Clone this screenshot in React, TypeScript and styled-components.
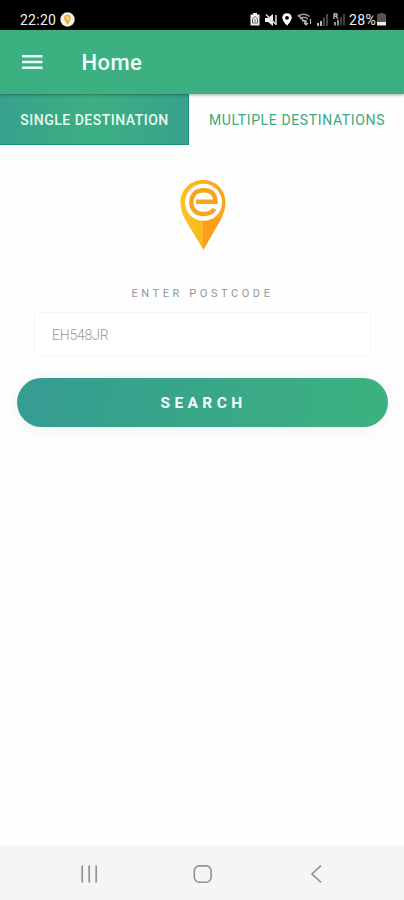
import React from "react";
import styled, { createGlobalStyle } from "styled-components";

const GlobalStyle = createGlobalStyle`
  * { box-sizing: border-box; }
  body { margin: 0; background: #fefefe; font-family: Roboto, sans-serif; }
  button, input { font-family: inherit; }
`;

const Screen = styled.div`
  display: flex;
  flex-direction: column;
  height: 900px;
  width: 100%;
  overflow: hidden;
  background: #fefefe;
`;

const StatusBar = styled.div`
  display: flex;
  align-items: center;
  height: 30px;
  flex: none;
  padding: 9px 18px 0 20px;
  background: #000;
  color: #eee;
`;

const StatusText = styled.span<{ $tracking: number }>`
  font-size: 14px;
  line-height: 20px;
  letter-spacing: ${(p) => p.$tracking}px;
`;

const AppBadge = styled.svg`
  margin-left: 4px;
  flex: none;
`;

const StatusIcons = styled.div`
  display: flex;
  align-items: center;
  gap: 5px;
  margin-left: auto;
  svg { flex: none; display: block; }
`;

const BatteryReading = styled.div`
  display: flex;
  align-items: center;
  margin-left: -1px;
  gap: 1px;
`;

const Header = styled.header`
  display: flex;
  align-items: center;
  flex: none;
  height: 64px;
  padding-left: 22px;
  background: #3cb081;
  box-shadow: 0 1px 3px rgba(0, 0, 0, 0.35);
  z-index: 1;
`;

const MenuButton = styled.button`
  display: flex;
  padding: 0;
  border: 0;
  background: none;
`;

const Title = styled.h1`
  margin: 1px 0 0 38.5px;
  color: #f0fff8;
  font-size: 22px;
  font-weight: 500;
  line-height: 28px;
  letter-spacing: 0.4px;
`;

const Tabs = styled.div`
  display: flex;
  flex: none;
  height: 51px;
`;

const Tab = styled.button<{ $active?: boolean }>`
  flex: ${(p) => (p.$active ? "0 0 189px" : "1")};
  padding: ${(p) => (p.$active ? "2px 0 0 1px" : "1px 0 0 1px")};
  border: 0 solid #159078;
  border-width: ${(p) => (p.$active ? "0 1px 1px 0" : "0")};
  background: ${(p) =>
    p.$active ? "linear-gradient(90deg, #38a18e 0%, #3cb081 50%, #38a18e 100%)" : "transparent"};
  color: ${(p) => (p.$active ? "#e8fbf4" : "#3aa980")};
  font-size: 14px;
  font-weight: ${(p) => (p.$active ? 500 : 400)};
  letter-spacing: ${(p) => (p.$active ? 0.5 : 0.63)}px;
  white-space: nowrap;
`;

const Form = styled.form`
  display: flex;
  flex-direction: column;
  align-items: center;
  flex: 1;
  padding: 35px 16px 0 17px;
`;

const Label = styled.label`
  margin-top: 36px;
  height: 16px;
  font-size: 11px;
  line-height: 16px;
  letter-spacing: 3.58px;
  color: #969696;
`;

const PostcodeInput = styled.input`
  width: 337px;
  height: 45px;
  margin-top: 10px;
  padding: 0 17px 0;
  border: 1px solid #f7f7f7;
  background: #fff;
  font-size: 14px;
  letter-spacing: -0.2px;
  font-weight: 300;
  &::placeholder { color: #989898; opacity: 1; }
`;

const SearchButton = styled.button`
  width: 100%;
  height: 49px;
  margin-top: 21px;
  padding: 0 0 0 2px;
  border: 0;
  border-radius: 25px;
  background: linear-gradient(105deg, #359d91 8%, #3cb080 92%);
  box-shadow: 0 2px 18px rgba(0, 0, 0, 0.06);
  color: #f4fffc;
  font-size: 15.5px;
  font-weight: 700;
  letter-spacing: 4.4px;
`;

const NavBar = styled.nav`
  display: grid;
  grid-template-columns: repeat(3, 20px);
  gap: 94px;
  align-items: center;
  flex: none;
  height: 54px;
  padding: 1px 0 0 79px;
  background: #f5f5f5;
  svg { display: block; }
`;

function PinLogo() {
  return (
    <svg width="46" height="70" viewBox="0 0 46 70">
      <defs>
        <linearGradient id="pinShade" x1="0" x2="1" y1="0.3" y2="0">
          <stop offset="0" stopColor="#fac321" />
          <stop offset="1" stopColor="#f8a01f" />
        </linearGradient>
      </defs>
      <path d="M23 0C10 0 .5 10 .5 22.500C.5 32 5 39 9 46L23.500 70L37 46C41 39 45.500 32 45.500 22.500C45.500 10 36 0 23 0Z" fill="url(#pinShade)" />
      <path d="M23 40V69.500L37 46L42 37Z" fill="#fa9e1b" />
      <circle cx="23.500" cy="22.300" r="18.500" fill="#fff" />
      <path d="M16 21.700H35.500C35 13.500 31 10.300 23.500 10.300C15.300 10.300 11.300 15.500 11.300 22.300C11.300 29.500 16 34 23.500 34C28.500 34 32.500 32 34.500 29" fill="none" stroke="#f8a51e" strokeWidth="4.400" />
    </svg>
  );
}

export default function App() {
  return (
    <>
      <GlobalStyle />
      <Screen>
        <StatusBar>
          <StatusText $tracking={0.25}>22:20</StatusText>
          <AppBadge width="15" height="15" viewBox="0 0 15 15">
            <circle cx="7.500" cy="7.500" r="7.200" fill="#f5f2e8" />
            <path d="M7.500 2.500C5 2.500 4 4.300 4 6C4 8.500 7.500 12.800 7.500 12.800S11 8.500 11 6C11 4.300 10 2.500 7.500 2.500Z" fill="#e9b43d" />
            <circle cx="7.500" cy="6" r="1.800" fill="#eed393" />
          </AppBadge>
          <StatusIcons>
            <svg width="10" height="13" viewBox="0 0 10 13">
              <path d="M3 0H7V1.500H9.500V12.500H.5V1.500H3Z" fill="#eee" />
              <path d="M5 3.500L2.500 6V10H7.500V6ZM5 6V9" fill="none" stroke="#666" />
            </svg>
            <svg width="12" height="12" viewBox="0 0 12 12">
              <path d="M0 4H3L8 0V12L3 8H0Z" fill="#eee" />
              <path d="M1 .5L11 10.500M11 1V11" stroke="#ddd" strokeWidth="1.500" />
            </svg>
            <svg width="10" height="13" viewBox="0 0 10 13">
              <path d="M5 .3C2 .3.3 2.300.3 4.800C.3 8 5 12.700 5 12.700S9.700 8 9.700 4.800C9.700 2.300 8 .3 5 .3Z" fill="#fff" />
              <circle cx="5" cy="4.800" r="1.900" fill="#000" />
            </svg>
            <svg width="15" height="13" viewBox="0 0 15 13">
              <path d="M1 3.500Q6.500-1 12.500 3.500M3 6Q7 2.500 11 6M5 8.500Q7 6.500 9 8.500" fill="none" stroke="#999" strokeWidth="1.500" />
              <path d="M1 2L10 11M9 7V12M7 10L9 12L11 10M13.500 11V6" fill="none" stroke="#bbb" strokeWidth="1.100" />
            </svg>
            <svg width="11" height="12" viewBox="0 0 11 12">
              <path d="M1 9V12M4 7V12" stroke="#bbb" strokeWidth="2" />
              <path d="M7 3.500V12M10 0V12" stroke="#555" strokeWidth="1.700" />
            </svg>
            <svg width="12" height="13" viewBox="0 0 12 13">
              <path d="M1 6V.8H3.500Q5 2 3.500 3.200H1M3 3.200L5 6" fill="none" stroke="#ccc" strokeWidth="1.200" />
              <path d="M2 9V12.500M5 7V12.500" stroke="#aaa" strokeWidth="1.700" />
              <path d="M8 4V12.500M11 1V12.500" stroke="#555" strokeWidth="1.500" />
            </svg>
            <BatteryReading>
              <StatusText $tracking={0.3}>28%</StatusText>
              <svg width="9" height="13" viewBox="0 0 9 13">
                <path d="M2.500 0H6.500V1H9V9H0V1H2.500Z" fill="#555" />
                <path d="M0 9H9V12Q9 12.500 8.500 12.500H.5Q0 12.500 0 12Z" fill="#eee" />
              </svg>
            </BatteryReading>
          </StatusIcons>
        </StatusBar>
        <Header>
          <MenuButton type="button" aria-label="Menu">
            <svg width="21" height="14" viewBox="0 0 21 14">
              <path d="M0 1.200H20.500M0 7H20.500M0 12.800H20.500" stroke="#e9fff5" strokeWidth="2.400" />
            </svg>
          </MenuButton>
          <Title>Home</Title>
        </Header>
        <Tabs>
          <Tab type="button" $active>SINGLE DESTINATION</Tab>
          <Tab type="button">MULTIPLE DESTINATIONS</Tab>
        </Tabs>
        <Form>
          <PinLogo />
          <Label htmlFor="postcode">ENTER POSTCODE</Label>
          <PostcodeInput id="postcode" placeholder="EH548JR" />
          <SearchButton type="button">SEARCH</SearchButton>
        </Form>
        <NavBar>
          <svg width="20" height="18" viewBox="0 0 20 18">
            <path d="M3.200.5V17.500M10.200.5V17.500M17.200.5V17.500" stroke="#929292" strokeWidth="1.700" />
          </svg>
          <svg width="20" height="18" viewBox="0 0 20 18">
            <rect x="1.300" y=".9" width="16.800" height="16.300" rx="5" fill="none" stroke="#929292" strokeWidth="1.600" />
          </svg>
          <svg width="20" height="18" viewBox="0 0 20 18">
            <path d="M14 .7L5 9L14 17.300" fill="none" stroke="#929292" strokeWidth="1.600" />
          </svg>
        </NavBar>
      </Screen>
    </>
  );
}
